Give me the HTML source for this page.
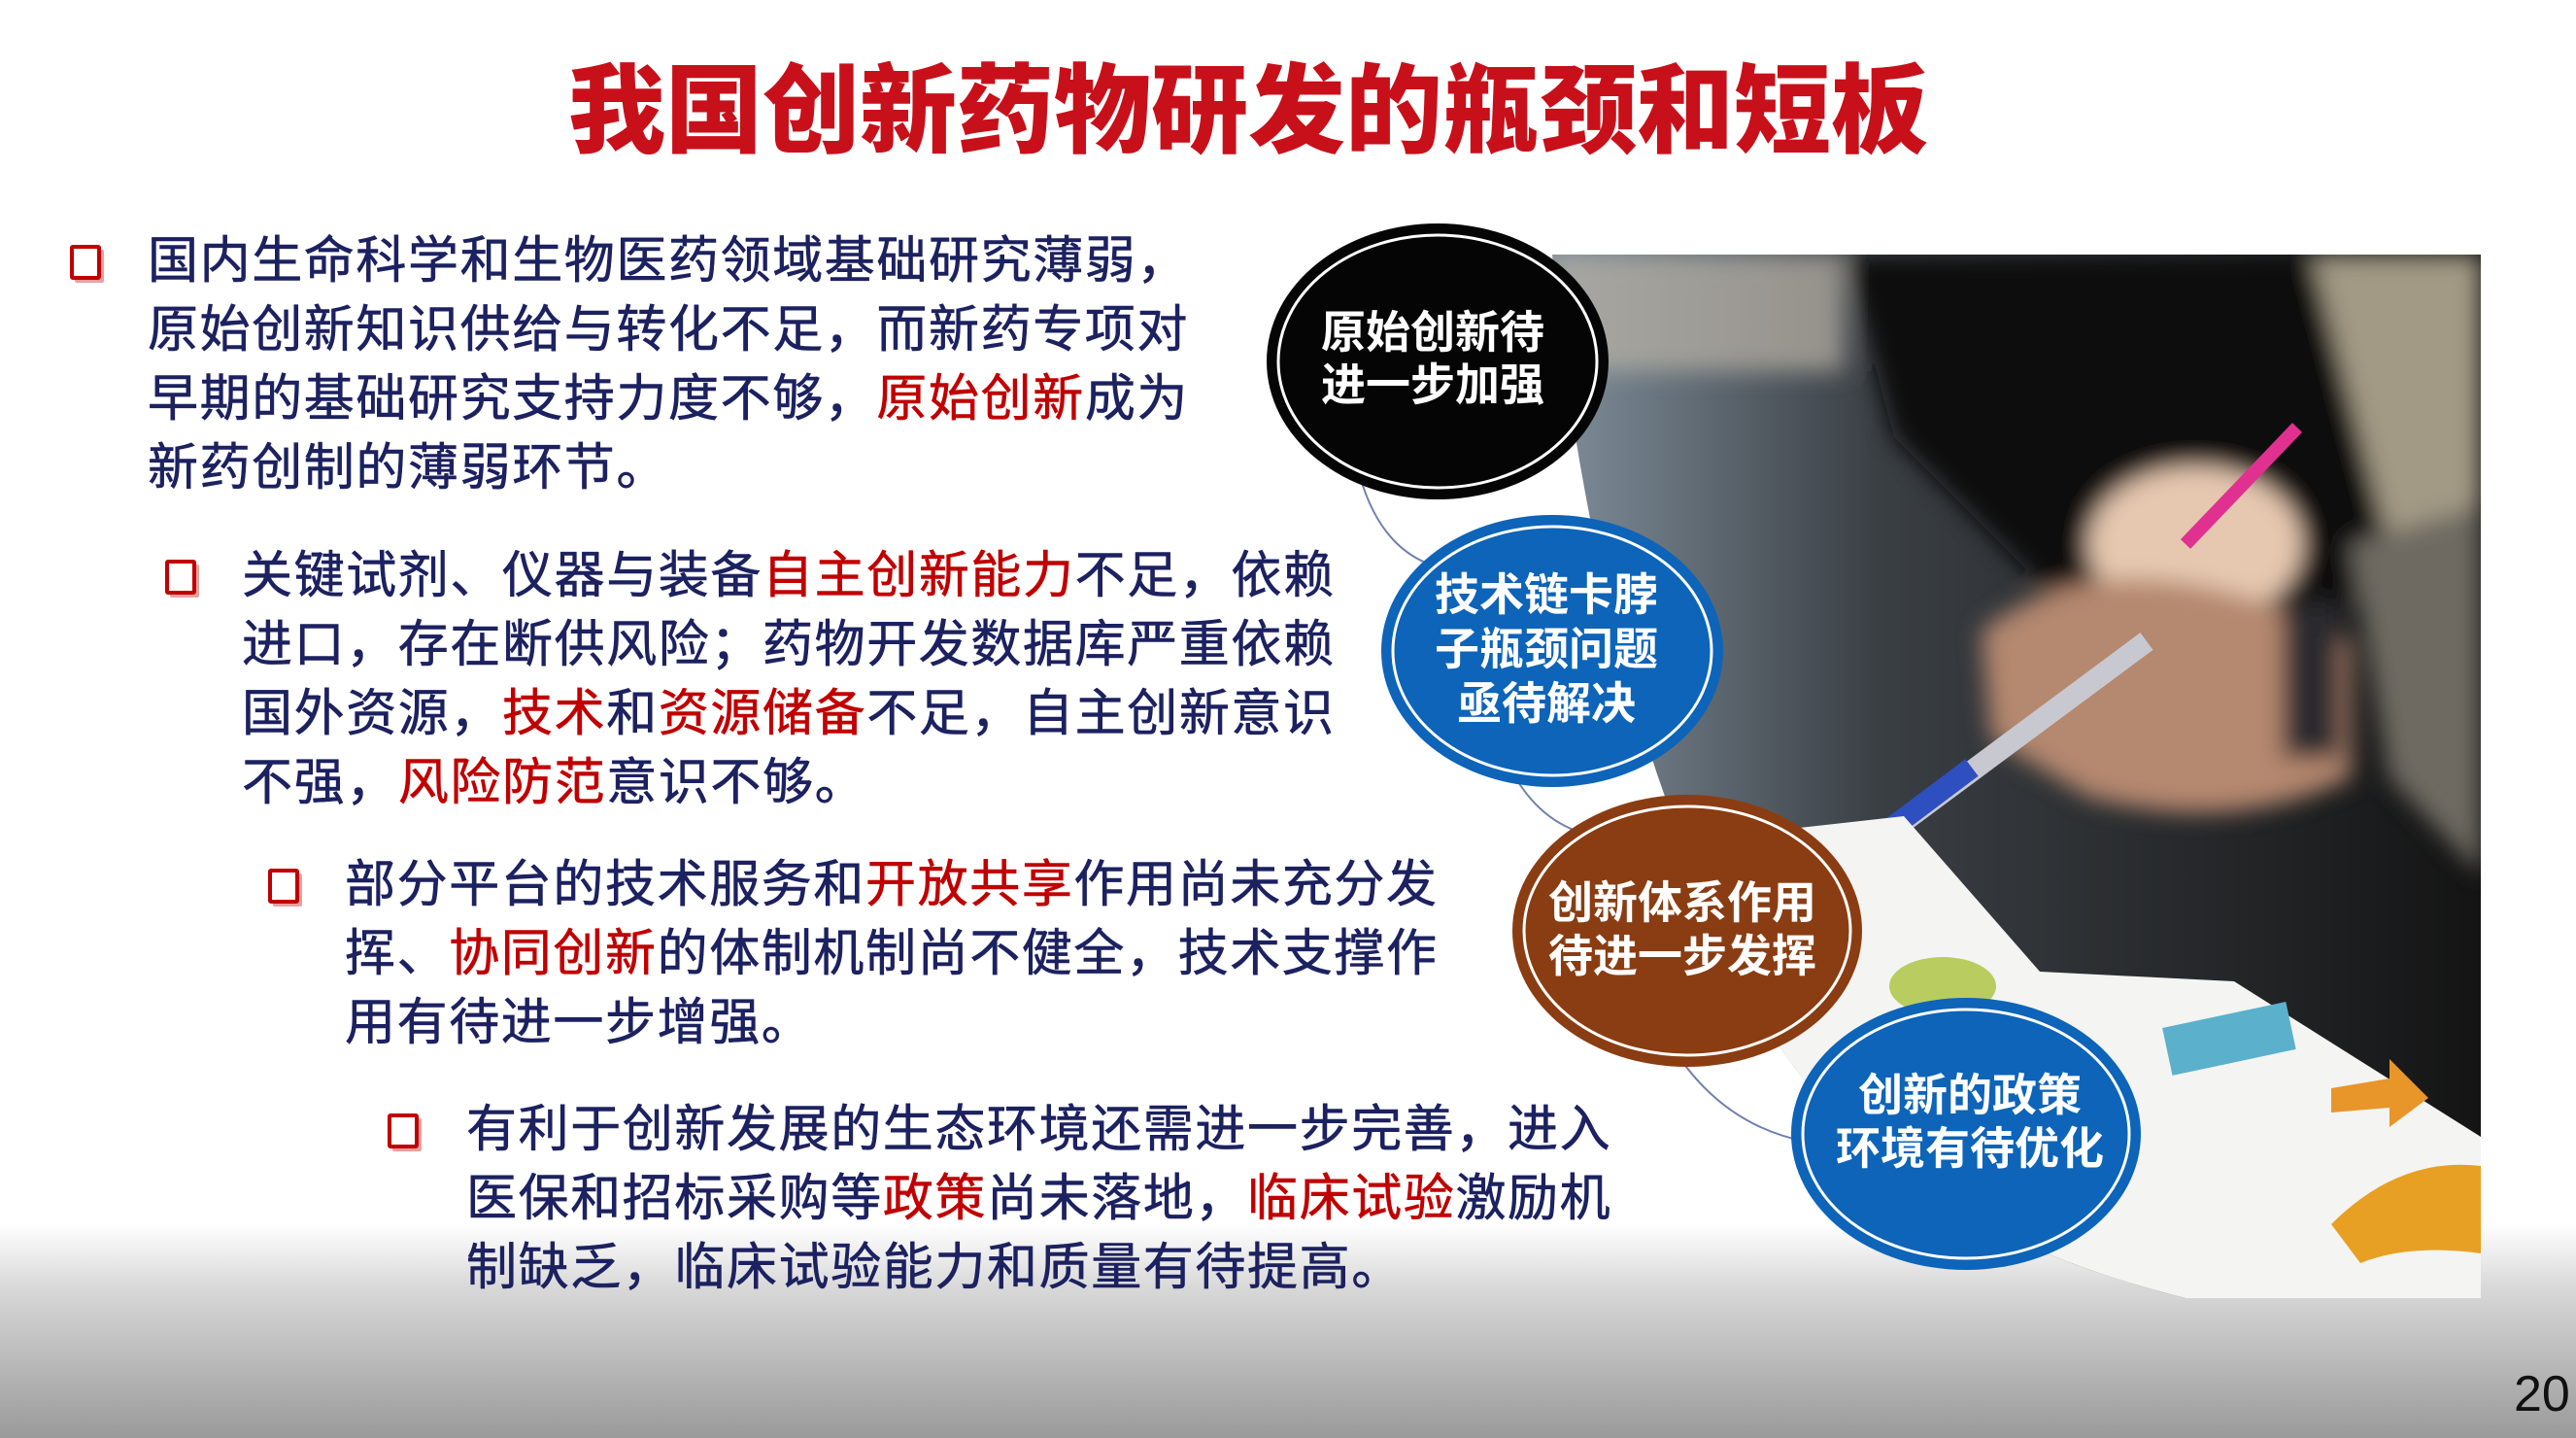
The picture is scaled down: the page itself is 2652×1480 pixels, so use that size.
<!DOCTYPE html>
<html><head><meta charset="utf-8"><style>
html,body{margin:0;padding:0}
body{width:2652px;height:1480px;position:relative;overflow:hidden;background:#fff;font-family:"Liberation Sans","Noto Sans CJK SC",sans-serif}
.title{position:absolute;left:0;width:2570px;top:50px;text-align:center;font-size:100px;font-weight:900;color:#c8101a;letter-spacing:0px;line-height:130px}
.p{position:absolute;font-size:52px;line-height:71px;color:#1c2160;letter-spacing:1.6px;white-space:nowrap;-webkit-text-stroke:0.6px #1c2160}
.p span{color:#c00000;-webkit-text-stroke:0.6px #c00000}
.b{position:absolute;width:24px;height:28px;border:4px solid #c00000;border-radius:3px;box-shadow:4px 4px 0 -1px #e8a0a0}
.bot{position:absolute;left:0;top:1260px;width:2652px;height:220px;background:linear-gradient(#fff 0%,#d8d8d8 30%,#9a9a9a 100%)}
.pg{position:absolute;left:2588px;top:1405px;font-size:52px;color:#111}
</style></head><body>
<div class="bot"></div>
<div class="title">我国创新药物研发的瓶颈和短板</div>

<div class="b" style="left:72px;top:252px"></div>
<div class="p" style="left:152px;top:234px">国内生命科学和生物医药领域基础研究薄弱，<br>原始创新知识供给与转化不足，而新药专项对<br>早期的基础研究支持力度不够，<span>原始创新</span>成为<br>新药创制的薄弱环节。</div>

<div class="b" style="left:170px;top:576px"></div>
<div class="p" style="left:249px;top:558px">关键试剂、仪器与装备<span>自主创新能力</span>不足，依赖<br>进口，存在断供风险；药物开发数据库严重依赖<br>国外资源，<span>技术</span>和<span>资源储备</span>不足，自主创新意识<br>不强，<span>风险防范</span>意识不够。</div>

<div class="b" style="left:276px;top:894px"></div>
<div class="p" style="left:355px;top:876px">部分平台的技术服务和<span>开放共享</span>作用尚未充分发<br>挥、<span>协同创新</span>的体制机制尚不健全，技术支撑作<br>用有待进一步增强。</div>

<div class="b" style="left:399px;top:1146px"></div>
<div class="p" style="left:480px;top:1128px">有利于创新发展的生态环境还需进一步完善，进入<br>医保和招标采购等<span>政策</span>尚未落地，<span>临床试验</span>激励机<br>制缺乏，临床试验能力和质量有待提高。</div>

<svg style="position:absolute;left:0;top:0" width="2652" height="1480">
<defs>
<clipPath id="c"><path d="M1598 262 L2554 262 L2554 1336 L2250 1336 Q1900 1250 1790 1000 Q1640 700 1598 262Z"/></clipPath>
<linearGradient id="bg" x1="0" y1="0" x2="1" y2="0"><stop offset="0" stop-color="#7f8e9a"/><stop offset="0.35" stop-color="#3a3f44"/><stop offset="1" stop-color="#141414"/></linearGradient>
<filter id="bl"><feGaussianBlur stdDeviation="12"/></filter>
</defs>
<g clip-path="url(#c)">
<rect x="1598" y="262" width="956" height="1074" fill="url(#bg)"/>
<g filter="url(#bl)">
<rect x="1598" y="262" width="300" height="120" fill="#b9b2a6" opacity="0.7"/>
<path d="M1900 262 L2400 262 L2480 600 L2200 700 L1950 450Z" fill="#0d0d0d"/>
<path d="M2380 262 L2554 262 L2554 560 L2470 600Z" fill="#a39a85"/>
<path d="M2420 560 L2554 520 L2554 900 L2460 800Z" fill="#6e6a62"/>
<ellipse cx="2260" cy="560" rx="110" ry="80" fill="#e6c8b0"/>
<path d="M2040 650 Q2150 560 2330 620 L2420 660 L2420 800 Q2300 860 2150 820 L2050 760Z" fill="#b58870"/>
<rect x="2350" y="620" width="60" height="160" fill="#2a2a2e"/>
</g>
<path d="M1900 890 L2210 660" stroke="#c8c8d0" stroke-width="22"/>
<path d="M1910 880 L2030 790" stroke="#2d4fc0" stroke-width="22"/>
<path d="M2250 560 L2365 440" stroke="#e03090" stroke-width="14"/>
<path d="M1780 860 L1960 840 L2100 1000 L2300 1010 L2554 1170 L2554 1336 L1780 1336Z" fill="#f4f4f2"/>
<ellipse cx="2000" cy="1015" rx="55" ry="30" fill="#b9cc60"/>
<rect x="2230" y="1045" width="130" height="50" fill="#5bb0cc" transform="rotate(-12 2290 1070)"/>
<path d="M2400 1120 L2460 1110 L2460 1090 L2500 1130 L2460 1160 L2460 1140 L2400 1145Z" fill="#e8952a"/>
<path d="M2400 1260 Q2470 1190 2554 1200 L2554 1290 Q2480 1280 2430 1300Z" fill="#e8a024"/>
</g>
<path d="M1400 490 Q1420 560 1470 580" stroke="#7080b0" stroke-width="2" fill="none"/>
<path d="M1560 800 Q1590 850 1640 860" stroke="#7080b0" stroke-width="2" fill="none"/>
<path d="M1730 1090 Q1780 1160 1860 1175" stroke="#7080b0" stroke-width="2" fill="none"/>
<g font-family="Liberation Sans,Noto Sans CJK SC,sans-serif" font-weight="bold" font-size="46" fill="#fff" text-anchor="middle">
<ellipse cx="1480" cy="372" rx="176" ry="142" fill="#050505"/>
<ellipse cx="1480" cy="372" rx="164" ry="130" fill="none" stroke="#fff" stroke-width="3"/>
<text x="1475" y="358">原始创新待</text><text x="1475" y="412">进一步加强</text>
<ellipse cx="1598" cy="670" rx="176" ry="140" fill="#0d64b8"/>
<ellipse cx="1598" cy="670" rx="164" ry="128" fill="none" stroke="#fff" stroke-width="3"/>
<text x="1592" y="628">技术链卡脖</text><text x="1592" y="684">子瓶颈问题</text><text x="1592" y="740">亟待解决</text>
<ellipse cx="1737" cy="958" rx="180" ry="140" fill="#8a3d12"/>
<ellipse cx="1737" cy="958" rx="168" ry="128" fill="none" stroke="#fff" stroke-width="3"/>
<text x="1732" y="945">创新体系作用</text><text x="1732" y="1000">待进一步发挥</text>
<ellipse cx="2024" cy="1167" rx="180" ry="140" fill="#0d64b8"/>
<ellipse cx="2024" cy="1167" rx="168" ry="128" fill="none" stroke="#fff" stroke-width="3"/>
<text x="2028" y="1143">创新的政策</text><text x="2028" y="1198">环境有待优化</text>
</g>
</svg>
<div class="pg">20</div>
</body></html>
